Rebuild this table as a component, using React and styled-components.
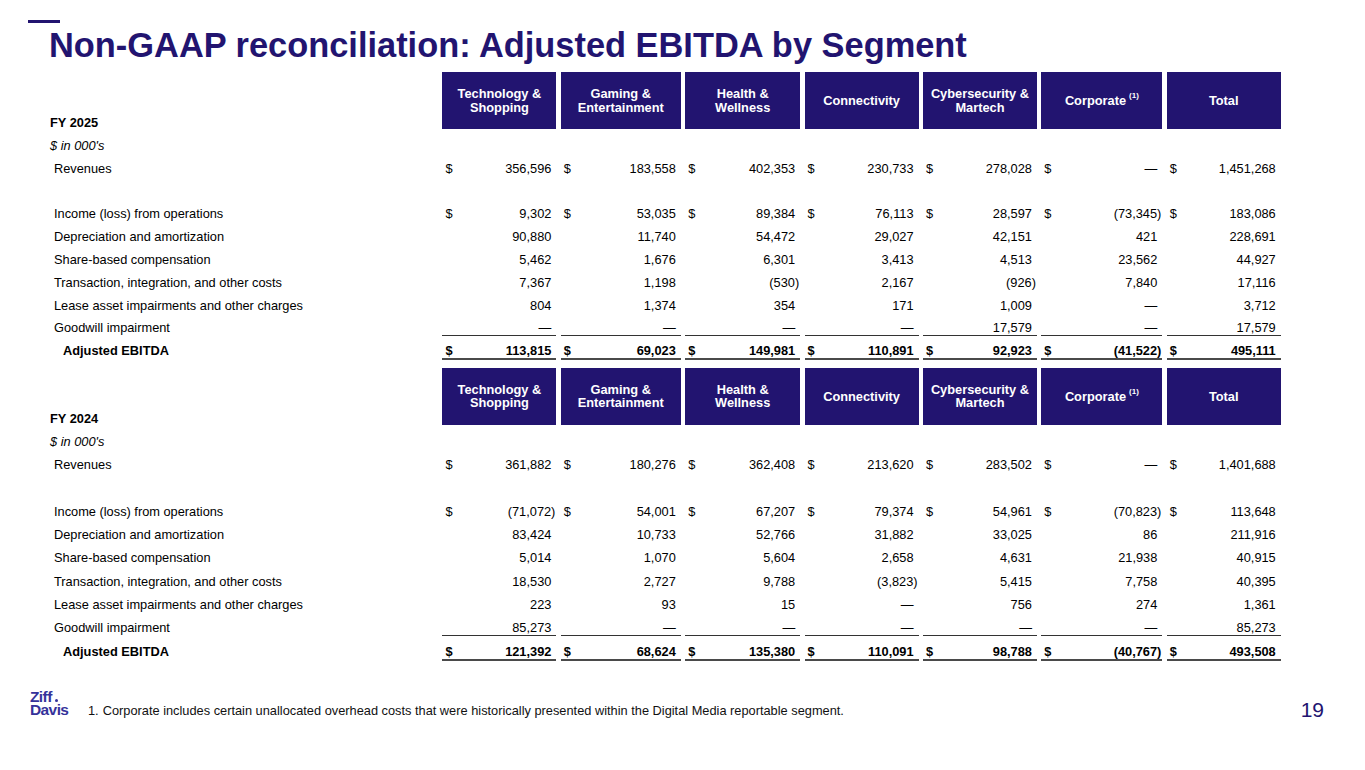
import React from 'react';
import styled, { createGlobalStyle } from 'styled-components';

const NAVY = '#221470';

const GlobalStyle = createGlobalStyle`
  html, body {
    margin: 0;
    padding: 0;
    background: #ffffff;
  }
  body {
    font-family: "Liberation Sans", Arial, sans-serif;
    color: #000;
  }
`;

const Page = styled.div`
  width: 1365px;
  height: 770px;
  display: flex;
  flex-direction: column;
  padding-top: 20px;
  box-sizing: border-box;
  overflow: hidden;
`;

const AccentBar = styled.div`
  width: 32px;
  height: 3px;
  margin-left: 28px;
  background: ${NAVY};
`;

const Title = styled.h1`
  margin: 5px 0 0 49px;
  font-size: 34.4px;
  line-height: 34px;
  font-weight: 700;
  color: ${NAVY};
`;

const Tables = styled.div`
  margin: 10px 0 0 50px;
  display: flex;
  flex-direction: column;
  gap: 11px;
`;

const Section = styled.section`
  display: flex;
  flex-direction: column;
`;

const Row = styled.div`
  display: grid;
  grid-template-columns: 388px 114px 120px 115px 114px 114px 121px 114px;
  column-gap: 4.4px;
  height: ${p => p.$h}px;
  font-size: 12.8px;
  font-weight: ${p => (p.$bold ? 700 : 400)};
`;

const HeaderRow = styled(Row)`
  height: 57px;
`;

const HeaderCell = styled.div`
  background: ${NAVY};
  color: #fff;
  font-weight: 700;
  font-size: 12.8px;
  line-height: 13.5px;
  display: flex;
  align-items: center;
  justify-content: center;
  text-align: center;
  padding: 0 6px;
  box-sizing: border-box;

  sup {
    font-size: 8px;
    line-height: 0;
    margin-left: 3px;
    position: relative;
    top: -1px;
  }
`;

const FyLabel = styled.div`
  align-self: end;
  font-weight: 700;
  line-height: 15px;
  margin-bottom: -1px;
`;

const Label = styled.div`
  padding: 9px 0 0 ${p => p.$indent}px;
  line-height: 15px;
  font-style: ${p => (p.$italic ? 'italic' : 'normal')};
  box-sizing: border-box;
`;

const ValueCell = styled.div`
  display: flex;
  justify-content: space-between;
  padding: 9px 5px 0 3px;
  line-height: 15px;
  box-sizing: border-box;
  border-bottom: ${p =>
    p.$rule === 'total' ? '2px solid #4a4a4a' : p.$rule === 'thin' ? '1px solid #333' : 'none'};
`;

const Amount = styled.span`
  margin-right: ${p => (p.$neg ? '-4px' : '0')};
`;

const Footer = styled.footer`
  margin-top: auto;
  height: 30px;
  margin-bottom: 44px;
  display: flex;
  align-items: flex-start;
  padding: 0 41px 0 30px;
`;

const Logo = styled.div`
  width: 44px;
  margin-top: -6px;
  color: #35329a;
  font-weight: 700;
  font-size: 15.5px;
  line-height: 13px;
  letter-spacing: -0.6px;
  display: flex;
  flex-direction: column;

  span:first-child::after {
    content: '';
    display: inline-block;
    width: 3px;
    height: 3px;
    margin-left: 3px;
    background: #35329a;
    border-radius: 50%;
  }
`;

const Footnote = styled.p`
  margin: 0 0 0 14px;
  font-size: 12.8px;
  line-height: 14px;
  padding-top: 8px;
  color: #111;

  b {
    font-weight: 400;
    margin-right: 4px;
  }
`;

const PageNumber = styled.div`
  margin-left: auto;
  font-size: 21px;
  line-height: 24px;
  color: ${NAVY};
  padding-top: 2px;
`;

const HEADERS = [
  ['Technology &', 'Shopping'],
  ['Gaming &', 'Entertainment'],
  ['Health &', 'Wellness'],
  ['Connectivity'],
  ['Cybersecurity &', 'Martech'],
  ['Corporate'],
  ['Total'],
];

const LABELS = [
  { label: 'Revenues', dollar: true },
  { blank: true },
  { label: 'Income (loss) from operations', dollar: true },
  { label: 'Depreciation and amortization' },
  { label: 'Share-based compensation' },
  { label: 'Transaction, integration, and other costs' },
  { label: 'Lease asset impairments and other charges' },
  { label: 'Goodwill impairment', rule: 'thin' },
  { label: 'Adjusted EBITDA', dollar: true, rule: 'total', bold: true },
];

const DASH = '—';

const FY2025 = [
  ['356,596', '183,558', '402,353', '230,733', '278,028', DASH, '1,451,268'],
  null,
  ['9,302', '53,035', '89,384', '76,113', '28,597', '(73,345)', '183,086'],
  ['90,880', '11,740', '54,472', '29,027', '42,151', '421', '228,691'],
  ['5,462', '1,676', '6,301', '3,413', '4,513', '23,562', '44,927'],
  ['7,367', '1,198', '(530)', '2,167', '(926)', '7,840', '17,116'],
  ['804', '1,374', '354', '171', '1,009', DASH, '3,712'],
  [DASH, DASH, DASH, DASH, '17,579', DASH, '17,579'],
  ['113,815', '69,023', '149,981', '110,891', '92,923', '(41,522)', '495,111'],
];

const FY2024 = [
  ['361,882', '180,276', '362,408', '213,620', '283,502', DASH, '1,401,688'],
  null,
  ['(71,072)', '54,001', '67,207', '79,374', '54,961', '(70,823)', '113,648'],
  ['83,424', '10,733', '52,766', '31,882', '33,025', '86', '211,916'],
  ['5,014', '1,070', '5,604', '2,658', '4,631', '21,938', '40,915'],
  ['18,530', '2,727', '9,788', '(3,823)', '5,415', '7,758', '40,395'],
  ['223', '93', '15', DASH, '756', '274', '1,361'],
  ['85,273', DASH, DASH, DASH, DASH, DASH, '85,273'],
  ['121,392', '68,624', '135,380', '110,091', '98,788', '(40,767)', '493,508'],
];

function SegmentTable({ year, data, rowH }) {
  return (
    <Section>
      <HeaderRow $h={57}>
        <FyLabel>FY {year}</FyLabel>
        {HEADERS.map((lines, i) => (
          <HeaderCell key={i}>
            <div>
              {lines.map((l, j) => (
                <div key={j}>
                  {l}
                  {l === 'Corporate' && <sup>(1)</sup>}
                </div>
              ))}
            </div>
          </HeaderCell>
        ))}
      </HeaderRow>
      <Row $h={rowH}>
        <Label $indent={0} $italic>$ in 000's</Label>
      </Row>
      {LABELS.map((row, i) => {
        if (row.blank) return <Row key={i} $h={rowH} />;
        const values = data[i];
        return (
          <Row key={i} $h={rowH} $bold={row.bold}>
            <Label $indent={row.bold ? 13 : 4}>{row.label}</Label>
            {values.map((v, j) => (
              <ValueCell key={j} $rule={row.rule}>
                <span>{row.dollar ? '$' : ''}</span>
                <Amount $neg={v.startsWith('(')}>{v}</Amount>
              </ValueCell>
            ))}
          </Row>
        );
      })}
    </Section>
  );
}

export default function App() {
  return (
    <>
      <GlobalStyle />
      <Page>
        <AccentBar />
        <Title>Non-GAAP reconciliation: Adjusted EBITDA by Segment</Title>
        <Tables>
          <SegmentTable year="2025" data={FY2025} rowH={22.8} />
          <SegmentTable year="2024" data={FY2024} rowH={23.3} />
        </Tables>
        <Footer>
          <Logo>
            <span>Ziff</span>
            <span>Davis</span>
          </Logo>
          <Footnote>
            <b>1.</b>Corporate includes certain unallocated overhead costs that were historically presented
            within the Digital Media reportable segment.
          </Footnote>
          <PageNumber>19</PageNumber>
        </Footer>
      </Page>
    </>
  );
}
